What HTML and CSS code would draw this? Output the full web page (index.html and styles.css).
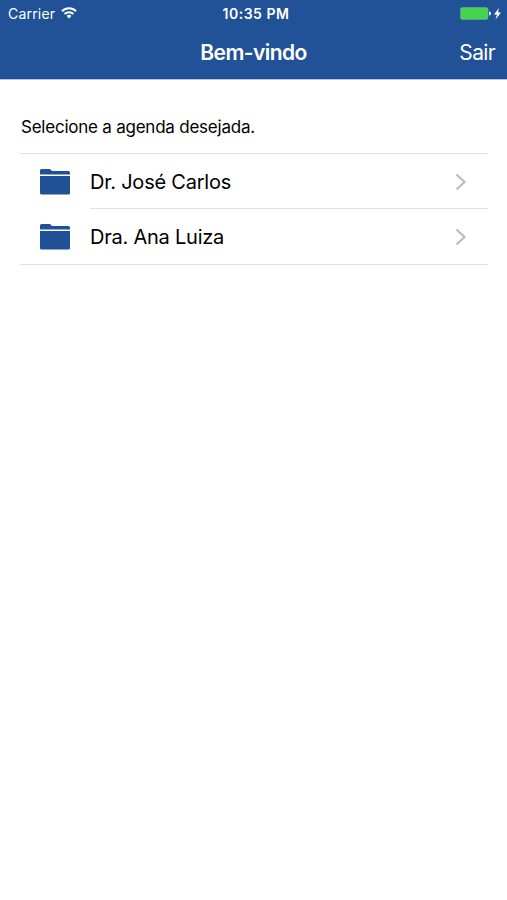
FILE: index.html
```html
<!DOCTYPE html>
<html lang="pt-BR">
<head>
<meta charset="utf-8">
<title>Bem-vindo</title>
<link rel="stylesheet" href="styles.css">
</head>
<body>
<header class="header">
  <div class="status">
    <div class="carrier"><span class="carrier-name">Carrier</span>
      <svg class="wifi" width="16" height="12" viewBox="0 0 16 12" fill="none" stroke="#fff" stroke-width="2"><path d="M1 4.200a10 10 0 0 1 14 0M3.500 7a6.400 6.400 0 0 1 9 0"/><path d="M8 11.500 5.600 9a3.400 3.400 0 0 1 4.800 0z" fill="#fff" stroke="none"/></svg>
    </div>
    <span class="time">10:35 PM</span>
    <svg class="battery" width="42" height="14" viewBox="0 0 42 14"><rect x=".5" y=".5" width="27.500" height="12" rx="2" fill="#43d551" stroke="#7fa695" stroke-width=".6"/><path d="M29 4.500q2 0 2 2t-2 2z" fill="#fff"/><path d="M39 1 34 7.500h3L35.500 12.500 41 5.500h-3z" fill="#fff"/></svg>
  </div>
  <nav class="nav"><h1 class="title">Bem-vindo</h1><a class="logout">Sair</a></nav>
</header>
<main class="content">
  <p class="prompt">Selecione a agenda desejada.</p>
  <ul class="list">
    <li class="row">
      <svg class="folder" width="32" height="28" viewBox="0 0 32 28"><path d="M1 6.500V2.500q0-1.500 1.500-1.500H11l2 2h16.500q1.500 0 1.500 1.500v2zM1 8h30v17q0 1.500-1.500 1.500h-27q-1.500 0-1.500-1.500z" fill="#205197"/></svg>
      <div class="cell"><span class="name">Dr. José Carlos</span><svg class="chevron" width="12" height="18" viewBox="0 0 12 18"><path d="m1.500 1.500 8 7.500-8 7.500" fill="none" stroke="#bdbdc0" stroke-width="2.300"/></svg></div>
    </li>
    <li class="row">
      <svg class="folder" width="32" height="28" viewBox="0 0 32 28"><path d="M1 6.500V2.500q0-1.500 1.500-1.500H11l2 2h16.500q1.500 0 1.500 1.500v2zM1 8h30v17q0 1.500-1.500 1.500h-27q-1.500 0-1.500-1.500z" fill="#205197"/></svg>
      <div class="cell"><span class="name">Dra. Ana Luiza</span><svg class="chevron" width="12" height="18" viewBox="0 0 12 18"><path d="m1.500 1.500 8 7.500-8 7.500" fill="none" stroke="#bdbdc0" stroke-width="2.300"/></svg></div>
    </li>
  </ul>
</main>
</body>
</html>
```
FILE: styles.css
```css
* { box-sizing: border-box; }
body { margin: 0; min-height: 900px; background: #fff; color: #000; font-family: Inter, "Liberation Sans", sans-serif; }
.header { height: 80px; background: #215197; color: #fff; border-bottom: 1px solid #b4c7df; }
.status { height: 27px; display: grid; grid-template-columns: 1fr auto 1fr; align-items: center; padding: 0 5px 0 8px; }
.carrier { display: flex; align-items: center; gap: 6px; font-size: 14px; letter-spacing: .2px; }
.wifi { margin-top: -2px; }
.time { font-size: 14px; font-weight: 600; letter-spacing: .5px; margin-left: 2px; }
.battery { justify-self: end; }
.nav { height: 50px; display: grid; grid-template-columns: 1fr auto 1fr; align-items: center; padding: 0 12px; }
.title { grid-column: 2; margin: 0; font-size: 21px; font-weight: 600; letter-spacing: -.55px; }
.logout { justify-self: end; font-size: 21px; letter-spacing: -.65px; }
.content { padding: 35px 19px 0 20px; }
.prompt { margin: 0; height: 38px; padding-left: 1px; line-height: 24px; font-size: 17px; letter-spacing: -.23px; }
.list { list-style: none; margin: 0; padding: 0; border-top: 1px solid #e2e2e2; border-bottom: 1px solid #e2e2e2; }
.row { display: flex; align-items: center; height: 55px; padding-left: 19px; }
.folder { margin-right: 19px; }
.cell { flex: 1; height: 55px; display: flex; align-items: center; justify-content: space-between; padding: 1px 21px 0 0; }
.row:first-child .cell { border-bottom: 1px solid #e2e2e2; }
.name { font-size: 20px; letter-spacing: -.23px; white-space: nowrap; }
```
